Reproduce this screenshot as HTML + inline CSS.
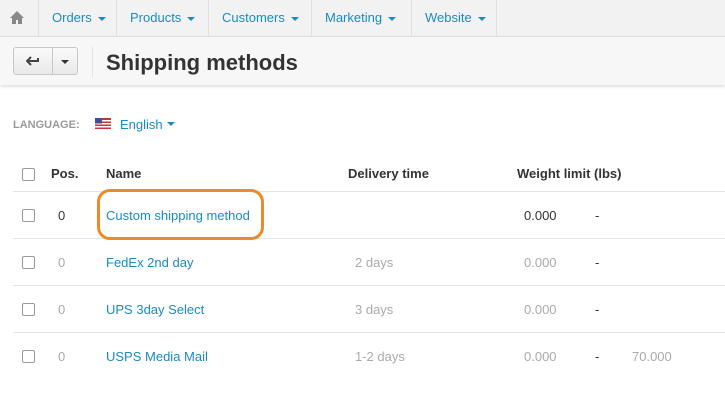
<!DOCTYPE html>
<html><head><style>
body{margin:0;width:725px;height:400px;overflow:hidden;background:#fff;font-family:"Liberation Sans",sans-serif;font-size:13px;color:#333;position:relative}
.nav{position:absolute;left:0;top:0;width:725px;height:36px;background:#f2f2f2;border-bottom:1px solid #ddd}
.nav .it{position:absolute;top:0;height:36px;line-height:36px;color:#1a8ac6;font-size:13px;border-left:1px solid #e0e0e0;box-sizing:border-box;padding-left:13px}
.car{display:inline-block;width:0;height:0;border-left:4px solid transparent;border-right:4px solid transparent;border-top:4px solid #1a8ac6;vertical-align:middle;margin-left:6px}
.tb{position:absolute;left:0;top:37px;width:725px;height:48px;background:#f7f7f7;box-shadow:0 2px 3px rgba(0,0,0,.12)}
.btn{position:absolute;top:10px;height:28px;border:1px solid #c8c8c8;border-radius:3px;background:linear-gradient(#fafafa,#e9e9e9);box-sizing:border-box}
h1{position:absolute;left:106px;top:50px;margin:0;font-size:22px;font-weight:bold;color:#333}
.lang{position:absolute;left:13px;top:119px;font-size:11px;font-weight:bold;color:#999}
.cb{position:absolute;left:22px;width:11px;height:11px;border:1px solid #999;border-radius:2px;background:#fff}
.t{position:absolute;white-space:nowrap}
.line{position:absolute;left:13px;width:712px;height:1px;background:#e3e3e3}
a{color:#1a8ac6;text-decoration:none}
.g{color:#aaa}
</style></head><body>
<div class="nav">
<svg style="position:absolute;left:10px;top:11px" width="14" height="13" viewBox="0 0 14 13"><path d="M7 0L0 7h2v6h4V9h2v4h4V7h2z" fill="#888"/></svg>
<div class="it" style="left:38px;width:78px">Orders<span class="car"></span></div>
<div class="it" style="left:116px;width:92px">Products<span class="car"></span></div>
<div class="it" style="left:208px;width:103px">Customers<span class="car"></span></div>
<div class="it" style="left:311px;width:100px">Marketing<span class="car"></span></div>
<div class="it" style="left:411px;width:85px">Website<span class="car"></span></div>
<div class="it" style="left:496px;width:229px"></div>
</div>
<div class="tb">
<div class="btn" style="left:13px;width:40px;border-radius:3px 0 0 3px"><svg style="position:absolute;left:12px;top:8px" width="14" height="10" viewBox="0 0 14 10"><path d="M5 1L1 5l4 4M1 5h11V2" stroke="#444" stroke-width="2" fill="none"/></svg></div>
<div class="btn" style="left:52px;width:26px;border-radius:0 3px 3px 0"><span style="position:absolute;left:8px;top:12px;border-left:4px solid transparent;border-right:4px solid transparent;border-top:4px solid #333"></span></div>
<div style="position:absolute;left:92px;top:10px;width:1px;height:30px;background:#e4e4e4"></div>
</div>
<h1>Shipping methods</h1>
<div class="lang">LANGUAGE:</div>
<svg style="position:absolute;left:95px;top:118px" width="16" height="11" viewBox="0 0 16 11"><rect width="16" height="11" fill="#c33"/><rect y="2" width="16" height="1.5" fill="#fff"/><rect y="5" width="16" height="1.5" fill="#fff"/><rect y="8" width="16" height="1.5" fill="#fff"/><rect width="7" height="5.5" fill="#3a4f9c"/></svg>
<div class="t" style="left:120px;top:117px"><a>English</a><span class="car" style="margin-left:4px;margin-top:-4px"></span></div>

<div class="cb" style="top:168px"></div>
<div class="t" style="left:51px;top:166px;font-weight:bold">Pos.</div>
<div class="t" style="left:106px;top:166px;font-weight:bold">Name</div>
<div class="t" style="left:348px;top:166px;font-weight:bold">Delivery time</div>
<div class="t" style="left:517px;top:166px;font-weight:bold">Weight limit (lbs)</div>
<div class="line" style="top:191px"></div>
<div class="line" style="top:238px"></div>
<div class="line" style="top:285px"></div>
<div class="line" style="top:332px"></div>

<div style="position:absolute;left:97px;top:189px;width:161px;height:45px;border:3px solid #f08a24;border-radius:13px;background:#fff"></div>

<div class="cb" style="top:209px"></div>
<div class="t" style="left:58px;top:208px">0</div>
<div class="t" style="left:106px;top:208px"><a>Custom shipping method</a></div>
<div class="t" style="left:524px;top:208px">0.000</div>
<div class="t" style="left:595px;top:208px">-</div>

<div class="cb" style="top:256px"></div>
<div class="t g" style="left:58px;top:255px">0</div>
<div class="t" style="left:106px;top:255px"><a>FedEx 2nd day</a></div>
<div class="t g" style="left:355px;top:255px">2 days</div>
<div class="t g" style="left:524px;top:255px">0.000</div>
<div class="t" style="left:595px;top:255px">-</div>

<div class="cb" style="top:303px"></div>
<div class="t g" style="left:58px;top:302px">0</div>
<div class="t" style="left:106px;top:302px"><a>UPS 3day Select</a></div>
<div class="t g" style="left:355px;top:302px">3 days</div>
<div class="t g" style="left:524px;top:302px">0.000</div>
<div class="t" style="left:595px;top:302px">-</div>

<div class="cb" style="top:350px"></div>
<div class="t g" style="left:58px;top:349px">0</div>
<div class="t" style="left:106px;top:349px"><a>USPS Media Mail</a></div>
<div class="t g" style="left:355px;top:349px">1-2 days</div>
<div class="t g" style="left:524px;top:349px">0.000</div>
<div class="t" style="left:595px;top:349px">-</div>
<div class="t g" style="left:632px;top:349px">70.000</div>
</body></html>
